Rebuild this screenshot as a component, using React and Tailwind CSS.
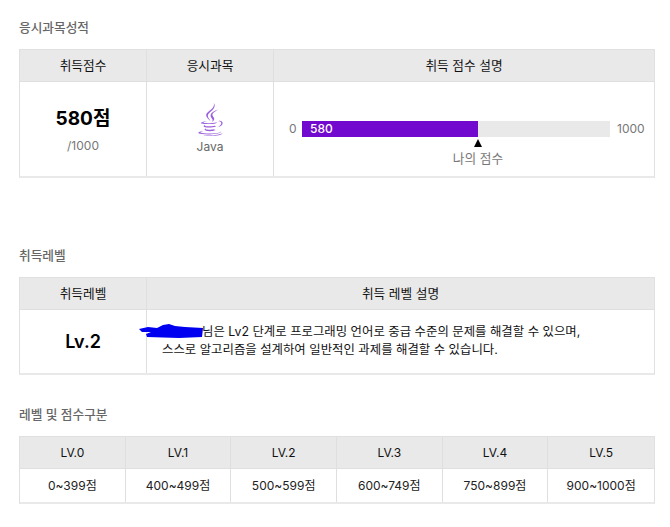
import React from 'react';
import { FaJava } from 'react-icons/fa';

const font = { fontFamily: 'Inter, "Noto Sans CJK KR", sans-serif' };

const levels = [
  { name: 'LV.0', range: '0~399점' },
  { name: 'LV.1', range: '400~499점' },
  { name: 'LV.2', range: '500~599점' },
  { name: 'LV.3', range: '600~749점' },
  { name: 'LV.4', range: '750~899점' },
  { name: 'LV.5', range: '900~1000점' }
];

function Title({ children, className }) {
  return <h2 className={`text-[12.7px] leading-[18px] font-medium text-[#666666] ${className}`}>{children}</h2>;
}

function Head({ children, className = '', size = 'text-[12.7px]' }) {
  return (
    <div className={`h-[32px] flex items-center justify-center bg-[#e9e9e9] border-b border-[#dfdfdf] text-[#111111] ${size} ${className}`}>
      {children}
    </div>
  );
}

export default function App() {
  return (
    <div style={font} className="w-[670px] h-[527px] bg-white overflow-hidden pl-[19px] pr-[15px] pt-[19px]">
      <Title className="mb-[12px]">응시과목성적</Title>
      <div className="grid grid-cols-[127px_127px_1fr] grid-rows-[32px_1fr] h-[129px] border-l border-r border-t border-b-2 border-[#e0e0e0] border-b-[#e9e9e9]">
        <Head className="border-r">취득점수</Head>
        <Head className="border-r">응시과목</Head>
        <Head>취득 점수 설명</Head>

        <div className="flex flex-col items-center pt-[23px] border-r border-[#dfdfdf]">
          <div className="text-[19px] leading-[28px] font-bold text-black">580점</div>
          <div className="text-[12px] leading-[18px] mt-[4px] text-[#777777]">/1000</div>
        </div>
        <div className="flex flex-col items-center border-r border-[#dfdfdf] pt-[21px]">
          <FaJava className="text-[#8a45d6] opacity-85" size={33} />
          <div className="text-[12px] leading-[16px] mt-[3px] text-[#666666]">Java</div>
        </div>
        <div className="flex flex-col pt-[39px] pl-[15px]">
          <div className="flex items-center h-[16px] text-[12px] text-[#777777]">
            <span className="w-[13px]">0</span>
            <div className="w-[308px] h-[16px] bg-[#e9e9e9] flex">
              <div className="w-[176px] h-full bg-[#7209ce] pl-[8px] text-[12px] leading-[16px] font-medium text-white">580</div>
            </div>
            <span className="ml-[7px]">1000</span>
          </div>
          <div className="ml-[13px] w-[352px] flex flex-col items-center">
            <div className="mt-[2px] w-0 h-0 border-l-[4.5px] border-r-[4.5px] border-b-[8px] border-l-transparent border-r-transparent border-b-black" />
            <div className="text-[12.7px] leading-[18px] mt-[3px] text-[#777777]">나의 점수</div>
          </div>
        </div>
      </div>

      <Title className="mt-[69px] mb-[12px]">취득레벨</Title>
      <div className="grid grid-cols-[127px_1fr] grid-rows-[32px_1fr] h-[98px] border-l border-r border-t border-b-2 border-[#e0e0e0] border-b-[#e9e9e9]">
        <Head className="border-r">취득레벨</Head>
        <Head>취득 레벨 설명</Head>
        <div className="flex items-center justify-center border-r border-[#dfdfdf] text-[18px] font-semibold text-black">Lv.2</div>
        <div className="relative pl-[15px] pt-[13px] text-[12.4px] leading-[18px] text-[#111111]">
          <p><span className="inline-block w-[40px]" />님은 Lv2 단계로 프로그래밍 언어로 중급 수준의 문제를 해결할 수 있으며,</p>
          <p>스스로 알고리즘을 설계하여 일반적인 과제를 해결할 수 있습니다.</p>
          {/* 이름 가림 낙서 */}
          <svg className="absolute left-[-8px] top-[14px]" width="66" height="15" viewBox="0 0 66 15">
            <path d="M0 5 L9 3 L18 4 L24 1 L30 0 L36 2 L46 3 L64 4 L63 13 L40 14 L8 13 L7 10 L12 8 L3 8 Z" fill="#0000f0" />
          </svg>
        </div>
      </div>

      <Title className="mt-[31px] mb-[12px]">레벨 및 점수구분</Title>
      <div className="grid grid-cols-6 grid-rows-[32px_1fr] h-[68px] border-l border-r border-t border-b-2 border-[#e0e0e0] border-b-[#e9e9e9]">
        {levels.map((l, i) => (
          <Head key={l.name} size="text-[12px]" className={i < 5 ? 'border-r' : ''}>{l.name}</Head>
        ))}
        {levels.map((l, i) => (
          <div key={l.name} className={`flex items-center justify-center text-[12px] text-[#222222] border-[#dfdfdf] ${i < 5 ? 'border-r' : ''}`}>
            {l.range}
          </div>
        ))}
      </div>
    </div>
  );
}
